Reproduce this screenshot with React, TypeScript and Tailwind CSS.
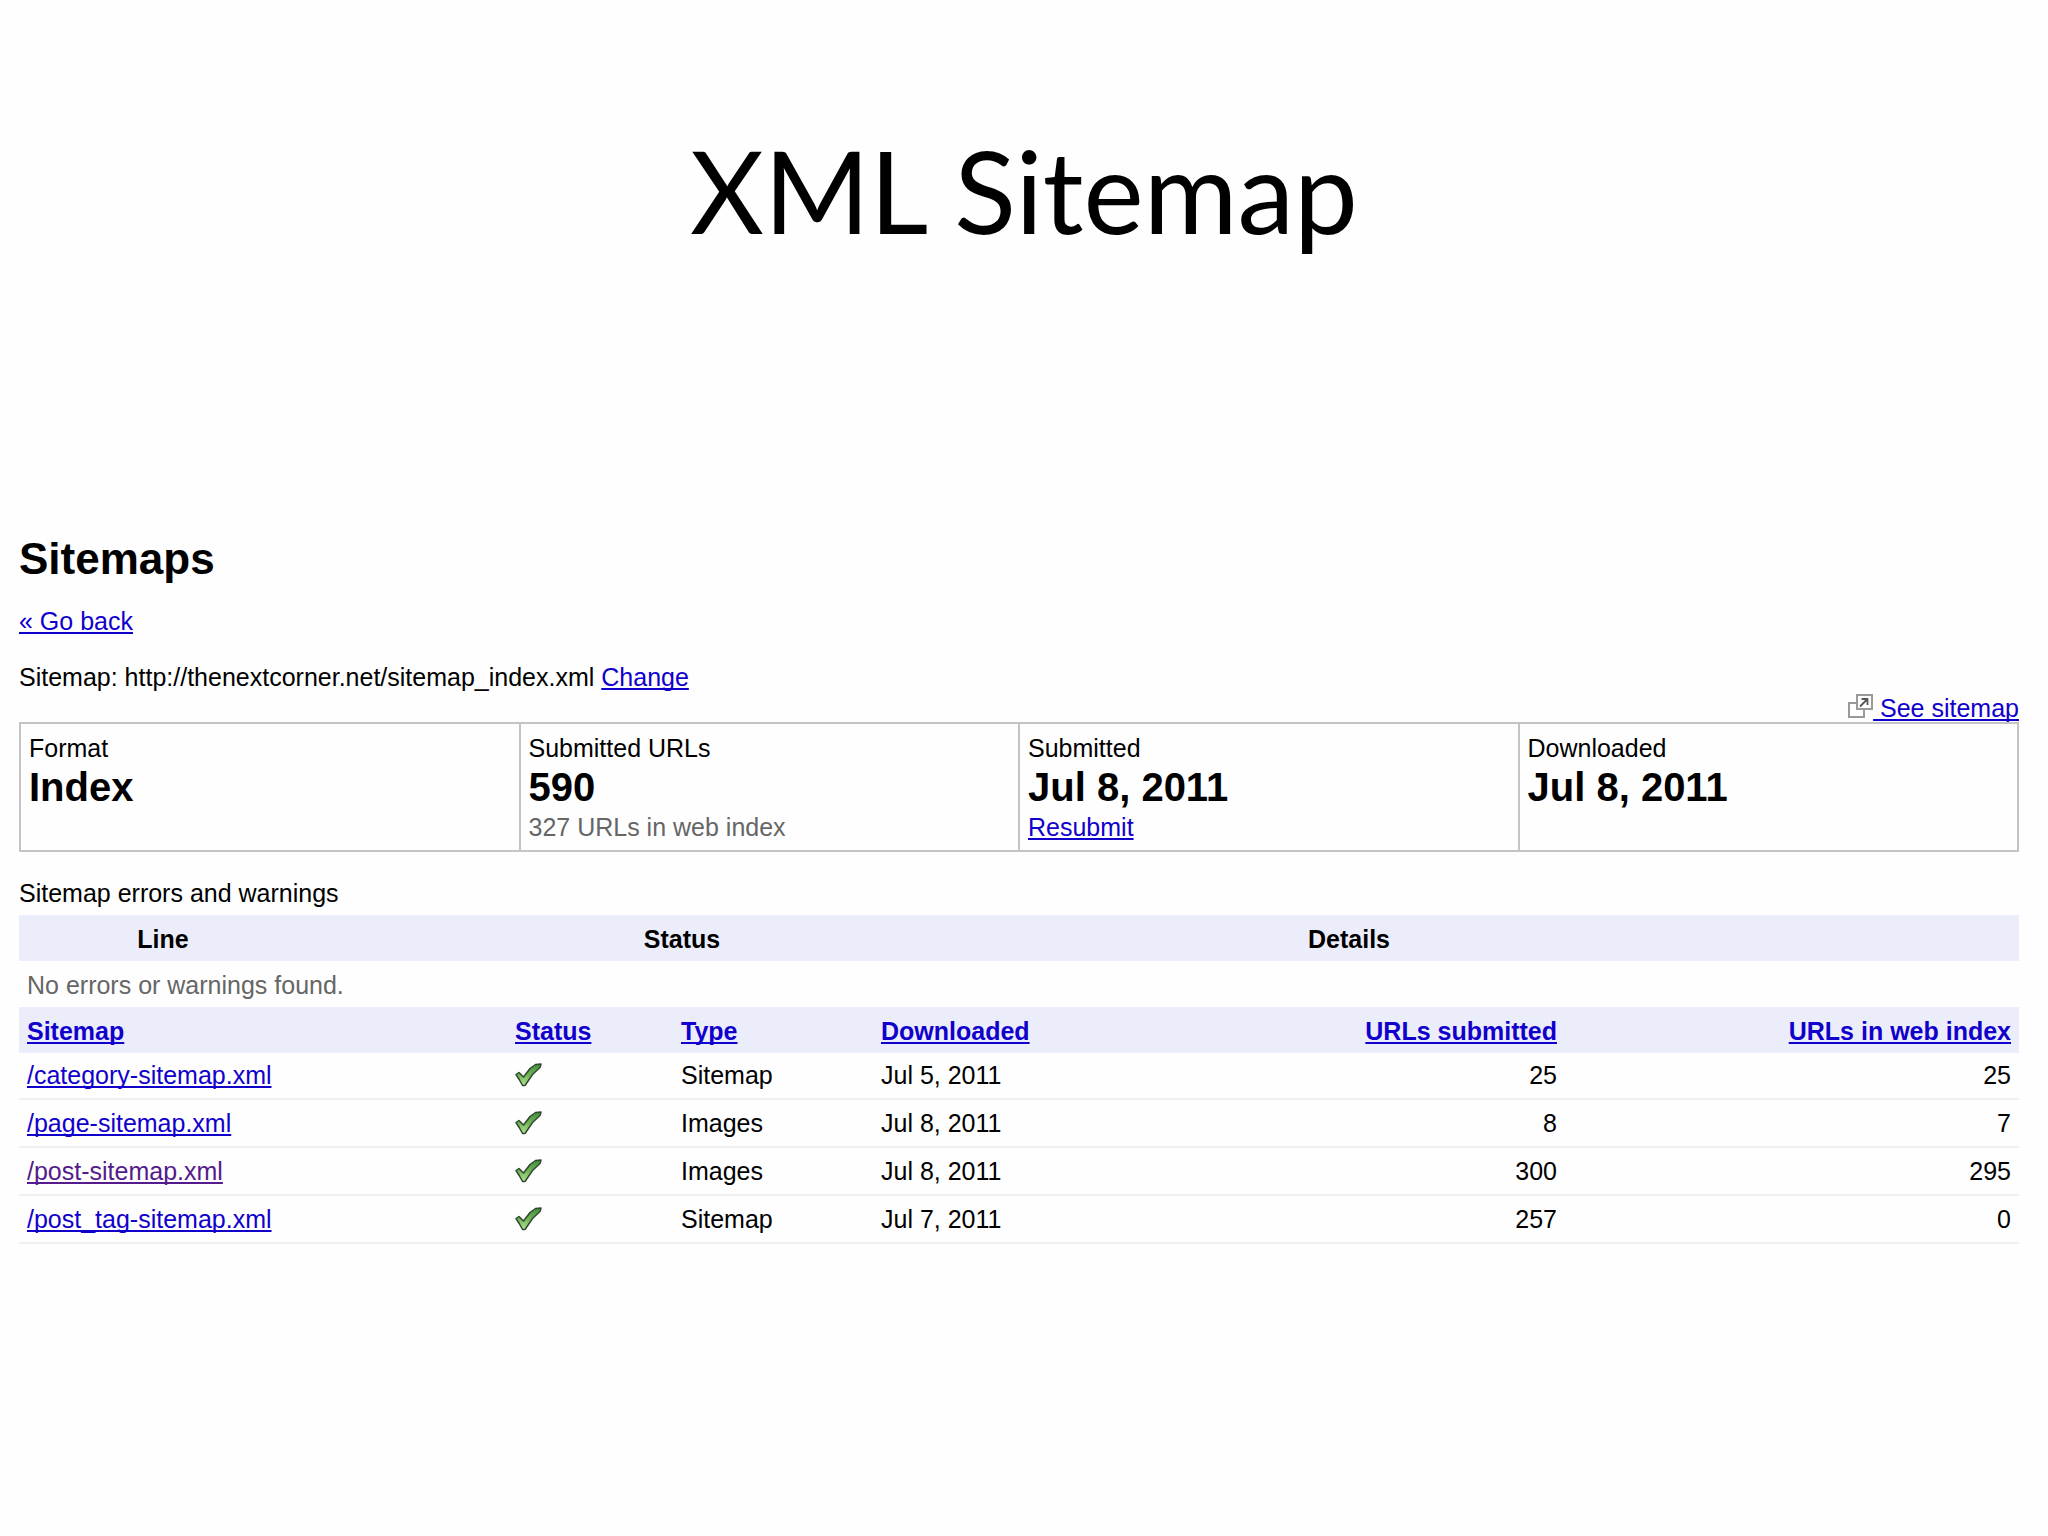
import type { ReactNode } from 'react';

interface SitemapRow {
    path: string;
    type: string;
    downloaded: string;
    submitted: number;
    indexed: number;
    visited?: boolean;
}

const sitemaps: SitemapRow[] = [
    { path: '/category-sitemap.xml', type: 'Sitemap', downloaded: 'Jul 5, 2011', submitted: 25, indexed: 25 },
    { path: '/page-sitemap.xml', type: 'Images', downloaded: 'Jul 8, 2011', submitted: 8, indexed: 7 },
    { path: '/post-sitemap.xml', type: 'Images', downloaded: 'Jul 8, 2011', submitted: 300, indexed: 295, visited: true },
    { path: '/post_tag-sitemap.xml', type: 'Sitemap', downloaded: 'Jul 7, 2011', submitted: 257, indexed: 0 },
];

const columns = [
    { label: 'Sitemap', className: 'w-[24.4%] text-left' },
    { label: 'Status', className: 'w-[8.3%] text-left' },
    { label: 'Type', className: 'w-[10%] text-left' },
    { label: 'Downloaded', className: 'w-[18%] text-left' },
    { label: 'URLs submitted', className: 'w-[16.6%] text-right' },
    { label: 'URLs in web index', className: 'w-[22.7%] text-right' },
];

function TextLink({ children, visited }: { children: ReactNode; visited?: boolean }) {
    return (
        <a
            href="#"
            className={`underline decoration-2 underline-offset-2 [text-decoration-skip-ink:none] ${visited ? 'text-[#551a8b]' : 'text-[#1100cc]'}`}
        >
            {children}
        </a>
    );
}

function NewWindowIcon() {
    return (
        <svg className="w-[25px] h-6" viewBox="0 0 25 24" fill="none" aria-hidden="true">
            <rect x="1" y="9" width="15" height="14" fill="#fff" stroke="#9a9a9a" strokeWidth="2" />
            <rect x="9" y="1" width="15" height="14" fill="#fff" stroke="#9a9a9a" strokeWidth="2" />
            <path d="M12 12.5L19 5.5M13.5 5H20M19.5 4.5V11" stroke="#555" strokeWidth="1.8" />
        </svg>
    );
}

function CheckIcon() {
    return (
        <svg className="w-[27px] h-6" viewBox="0 0 27 24" role="img" aria-label="OK">
            <defs>
                <linearGradient id="check-fill" x1="0" y1="0" x2="0" y2="1">
                    <stop offset="0" stopColor="#3f8f3c" />
                    <stop offset="0.5" stopColor="#72b35a" />
                    <stop offset="1" stopColor="#b5e38a" />
                </linearGradient>
            </defs>
            <path
                d="M1 11.5L4 9.5L8.5 14L15 5.5L20.5 1.5L26 1L25 4.5L17.5 11.5L10 22.5L7.5 22.5L4.5 17Z"
                fill="url(#check-fill)"
                stroke="#2f4a33"
                strokeWidth="1.5"
                strokeLinejoin="round"
            />
        </svg>
    );
}

function SummaryCell({ label, value, children }: { label: string; value: string; children?: ReactNode }) {
    return (
        <div className="border-r-2 border-[#c4c4c8] pt-2 pb-[7px] pl-2">
            <p className="leading-8">{label}</p>
            <p className="text-[40px] leading-[47px] font-bold">{value}</p>
            <div className="h-8 leading-8">{children}</div>
        </div>
    );
}

export default function App() {
    return (
        <main className="min-h-screen bg-[#fefefe] pt-32 text-black">
            <h1 className="text-center font-['Lato',sans-serif] text-[114px] leading-[124px]">XML Sitemap</h1>

            <section className="mt-[283px] pl-[19px] pr-[29px] pb-16 font-['Liberation_Sans',Arial,sans-serif] text-[25px] leading-7">
                <h2 className="text-[44px] leading-[48px] font-bold">Sitemaps</h2>
                <p className="mt-6">
                    <TextLink>« Go back</TextLink>
                </p>
                <p className="mt-7">
                    Sitemap: http://thenextcorner.net/sitemap_index.xml <TextLink>Change</TextLink>
                </p>

                <div className="mt-[3px] flex justify-end">
                    <NewWindowIcon />
                    <TextLink>&nbsp;See sitemap</TextLink>
                </div>

                {/* Summary */}
                <div className="grid grid-cols-4 border-2 border-r-0 border-[#c4c4c8]">
                    <SummaryCell label="Format" value="Index" />
                    <SummaryCell label="Submitted URLs" value="590">
                        <span className="text-[#666]">327 URLs in web index</span>
                    </SummaryCell>
                    <SummaryCell label="Submitted" value="Jul 8, 2011">
                        <TextLink>Resubmit</TextLink>
                    </SummaryCell>
                    <SummaryCell label="Downloaded" value="Jul 8, 2011" />
                </div>

                {/* Errors */}
                <table className="mt-[27px] w-full table-fixed border-separate border-spacing-0">
                    <caption className="pb-2 text-left">Sitemap errors and warnings</caption>
                    <thead>
                        <tr className="bg-[#ecedfa]">
                            <th className="w-[14.4%] pt-[10px] pb-2">Line</th>
                            <th className="w-[37.5%] pt-[10px] pb-2">Status</th>
                            <th className="w-[29.2%] pt-[10px] pb-2">Details</th>
                            <td />
                        </tr>
                    </thead>
                    <tbody>
                        <tr>
                            <td colSpan={4} className="px-2 pt-[10px] pb-2 text-[#666]">
                                No errors or warnings found.
                            </td>
                        </tr>
                    </tbody>
                </table>

                {/* Child sitemaps */}
                <table className="w-full table-fixed border-separate border-spacing-0">
                    <thead>
                        <tr className="bg-[#ecedfa]">
                            {columns.map((col) => (
                                <th key={col.label} className={`px-2 pt-[10px] pb-2 ${col.className}`}>
                                    <TextLink>{col.label}</TextLink>
                                </th>
                            ))}
                        </tr>
                    </thead>
                    <tbody className="[&_td]:border-b-2 [&_td]:border-[#efeff1] [&_td]:px-2 [&_td]:py-[9px] [&_tr:first-child_td]:pt-2">
                        {sitemaps.map((row) => (
                            <tr key={row.path}>
                                <td>
                                    <TextLink visited={row.visited}>{row.path}</TextLink>
                                </td>
                                <td>
                                    <CheckIcon />
                                </td>
                                <td>{row.type}</td>
                                <td>{row.downloaded}</td>
                                <td className="text-right">{row.submitted}</td>
                                <td className="text-right">{row.indexed}</td>
                            </tr>
                        ))}
                    </tbody>
                </table>
            </section>
        </main>
    );
}
